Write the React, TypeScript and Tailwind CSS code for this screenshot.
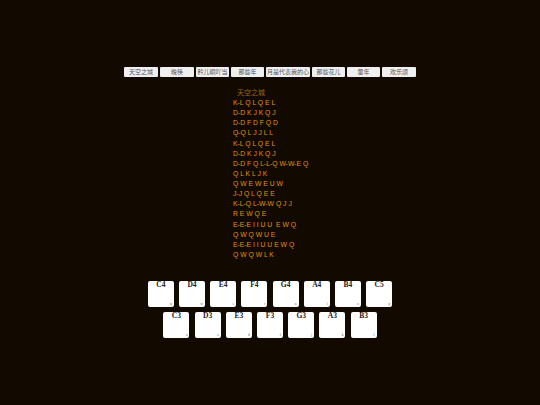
const SONGS = [
  { name: "天空之城", width: "w-[34px]" },
  { name: "晚筷", width: "w-[34px]" },
  { name: "矜儿峒吖当", width: "w-[33px]" },
  { name: "那些年", width: "w-[33px]" },
  { name: "月是代表我的心", width: "w-[44px]" },
  { name: "那些花儿", width: "w-[33px]" },
  { name: "童年", width: "w-[33px]" },
  { name: "欢乐颂", width: "w-[34px]" },
];

const LINES = [
  "K-L Q L Q E L",
  "D-D K J K Q J",
  "D-D F D F Q D",
  "Q-Q L J J L L",
  "K-L Q L Q E L",
  "D-D K J K Q J",
  "D-D F Q L-L-Q W-W-E Q",
  "Q L K L J K",
  "Q W E W E U W",
  "J-J Q L Q E E",
  "K-L-Q L-W-W Q J J",
  "R E W Q E",
  "E-E-E I I U U  E W Q",
  "Q W Q W U E",
  "E-E-E I I U U E W Q",
  "Q W Q W L K",
];

const TOP_KEYS = [
  ["C4", "q"], ["D4", "w"], ["E4", "e"], ["F4", "r"],
  ["G4", "u"], ["A4", "i"], ["B4", "o"], ["C5", "p"],
];

const BOTTOM_KEYS = [
  ["C3", "a"], ["D3", "s"], ["E3", "d"], ["F3", "f"],
  ["G3", "j"], ["A3", "k"], ["B3", "l"],
];

function Key({ note, hint }: { note: string; hint: string }) {
  return (
    <div className="relative h-[26px] w-[26px] rounded-[2px] bg-white text-center font-['Liberation_Serif',serif] text-[7.5px] font-bold leading-[8px] text-[#222]">
      {note}
      <span className="absolute bottom-[1px] right-[2px] text-[3.5px] font-normal leading-none text-[#555]">{hint}</span>
    </div>
  );
}

export default function App() {
  return (
    <div className="flex h-[405px] w-[540px] flex-col items-center overflow-hidden bg-[#120900] pt-[67px] font-['Liberation_Sans','Noto_Sans_CJK_SC',sans-serif] antialiased">
      <div className="flex gap-[2px]">
        {SONGS.map((s) => (
          <button
            key={s.name}
            className={`h-[10px] ${s.width} whitespace-nowrap rounded-[1px] bg-[#efefef] text-center font-['Noto_Sans_CJK_SC',sans-serif] text-[6px] leading-[10px] text-[#555]`}
          >
            {s.name}
          </button>
        ))}
      </div>

      <div className="ml-[233px] mt-[10px] self-start text-[6.8px] leading-[10.13px] text-[#e0950f]">
        <div className="pl-[4px] font-['Noto_Sans_CJK_SC',sans-serif] text-[7px] leading-[11px] text-[#9a6512]">天空之城</div>
        {LINES.map((line, i) => (
          <div key={i} className="whitespace-pre">{line}</div>
        ))}
      </div>

      <div className="mt-[21px] flex gap-[5.2px]">
        {TOP_KEYS.map(([note, hint]) => (
          <Key key={note} note={note} hint={hint} />
        ))}
      </div>
      <div className="mt-[5px] flex gap-[5.2px]">
        {BOTTOM_KEYS.map(([note, hint]) => (
          <Key key={note} note={note} hint={hint} />
        ))}
      </div>
    </div>
  );
}
